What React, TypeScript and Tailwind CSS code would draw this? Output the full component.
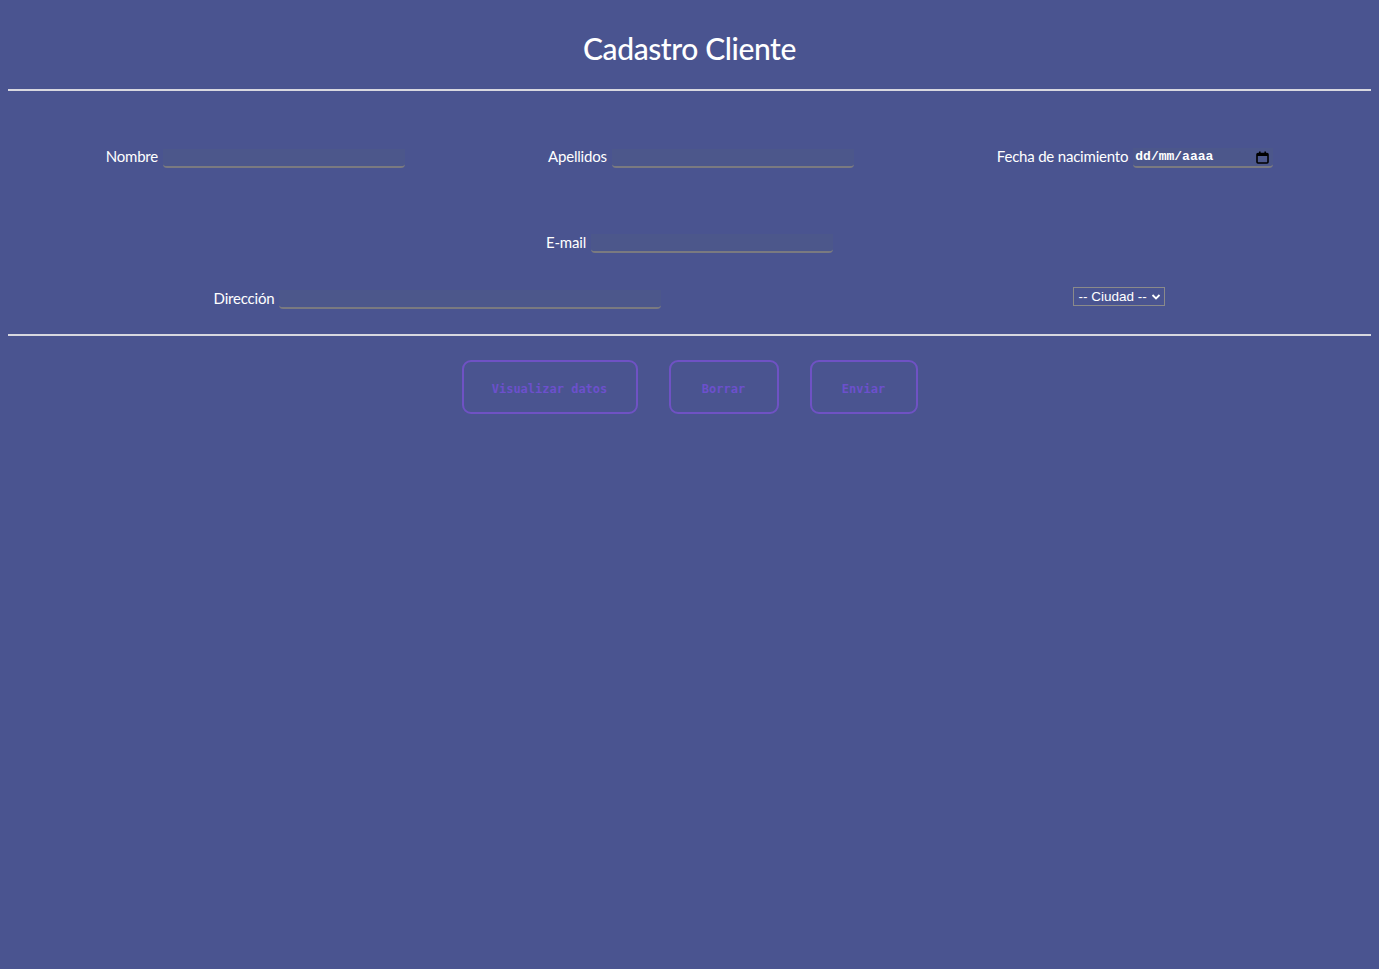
import React from "react";

function Field({ label, width }: { label: string; width: string }) {
  return (
    <div className="flex items-center gap-[5px]">
      <span className="text-[15px] text-white tracking-[-0.2px]">{label}</span>
      <div className={`${width} h-[19px] mt-[3px] bg-[#4c578b] border-b-[2px] border-[#7a7a80] rounded-b-[4px]`} />
    </div>
  );
}

export default function App() {
  return (
    <div
      className="min-h-[969px] w-full bg-[#4a5490] px-[8px] pt-[27px]"
      style={{ fontFamily: "Lato, 'Noto Sans', sans-serif" }}
    >
      <h1 className="text-center text-white text-[30px] font-medium leading-[42px] tracking-[-0.4px]">
        Cadastro Cliente
      </h1>
      <div className="mt-[20px] h-[2px] bg-[#d8d8e0]" />

      <div className="mt-[54px] flex justify-center gap-[143px]">
        <Field label="Nombre" width="w-[242px]" />
        <Field label="Apellidos" width="w-[242px]" />
        <div className="flex items-center gap-[5px]">
          <span className="text-[15px] text-white tracking-[-0.2px]">Fecha de nacimiento</span>
          <div className="w-[140px] h-[20px] mt-[3px] flex items-center justify-between pl-[2px] pr-[4px] bg-[#4c578b] border-b-[2px] border-[#7a7a80] rounded-b-[4px]">
            <span
              className="text-[13px] font-bold text-white"
              style={{ fontFamily: "'Liberation Mono', monospace" }}
            >
              dd/mm/aaaa
            </span>
            <svg width="13" height="13" viewBox="0 0 13 13">
              <rect x="1" y="2.5" width="11" height="9.5" rx="1" fill="none" stroke="#000" strokeWidth="1.6" />
              <rect x="1" y="2.5" width="11" height="2.5" fill="#000" />
              <rect x="3" y="0.5" width="1.6" height="3" fill="#000" />
              <rect x="8.4" y="0.5" width="1.6" height="3" fill="#000" />
            </svg>
          </div>
        </div>
      </div>

      <div className="mt-[63px] flex justify-center">
        <Field label="E-mail" width="w-[242px]" />
      </div>

      <div className="mt-[33px] flex justify-center items-center gap-[412px]">
        <Field label="Dirección" width="w-[382px]" />
        <div
          className="w-[92px] h-[19px] border border-[#8a8a8a] flex items-center justify-between pl-[4px] pr-[3px] text-white text-[13.5px] -mt-[2px]"
          style={{ fontFamily: "'Liberation Sans', Arial, sans-serif" }}
        >
          <span>-- Ciudad --</span>
          <svg width="10" height="8" viewBox="0 0 10 8">
            <path d="M1.5 2 L5 5.5 L8.5 2" fill="none" stroke="#fff" strokeWidth="1.8" />
          </svg>
        </div>
      </div>

      <div className="mt-[25px] h-[2px] bg-[#d8d8e0]" />

      <div className="mt-[24px] flex justify-center gap-[31px]">
        {[
          ["Visualizar datos", "w-[176px]"],
          ["Borrar", "w-[110px]"],
          ["Enviar", "w-[108px]"],
        ].map(([t, w]) => (
          <button
            key={t}
            className={`${w} h-[54px] rounded-[9px] border-2 border-[#6f52c4] text-[#6c50cc] text-[12px] font-bold pt-[4px]`}
            style={{ fontFamily: "'DejaVu Sans Mono', monospace" }}
          >
            {t}
          </button>
        ))}
      </div>
    </div>
  );
}
